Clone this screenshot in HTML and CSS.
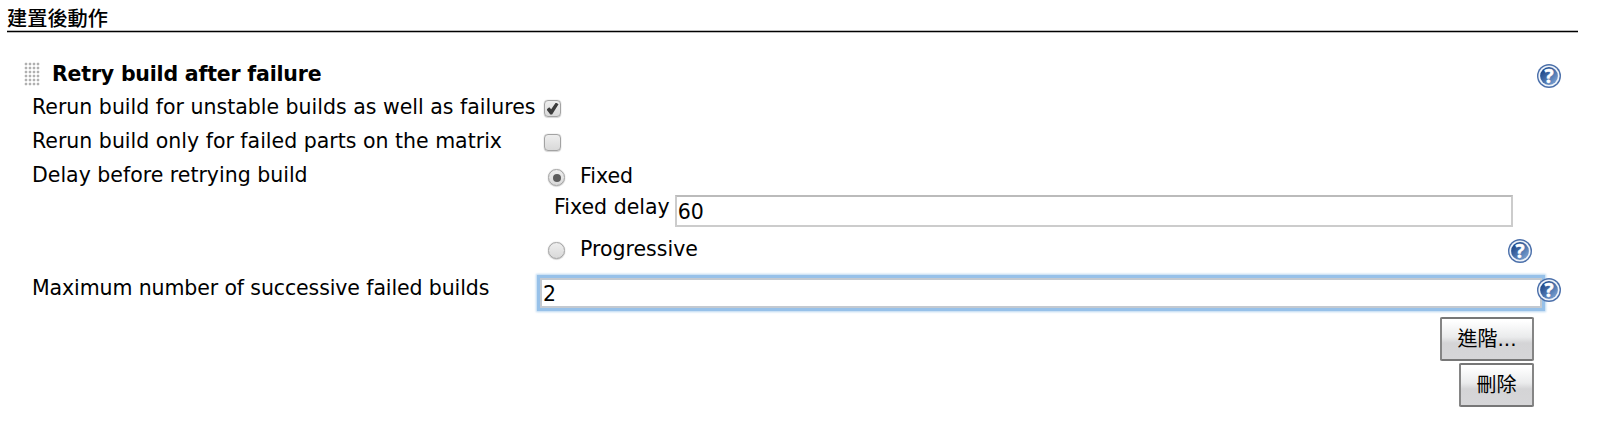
FILE: index.html
```html
<!DOCTYPE html>
<html lang="zh-TW">
<head>
  <meta charset="UTF-8">
  <title>建置後動作</title>
  <link rel="stylesheet" href="styles.css">
</head>
<body>
  <svg class="defs" width="0" height="0">
    <defs>
      <linearGradient id="ball" x1="0" y1="0" x2="1" y2="1">
        <stop offset="0.15" stop-color="#1d4788"/>
        <stop offset="0.9" stop-color="#7ba1d2"/>
      </linearGradient>
      <symbol id="help" viewBox="0 0 24 24">
        <circle cx="12" cy="12" r="12" fill="#4a6faa"/>
        <circle cx="12" cy="12" r="10.6" fill="#eef3f9"/>
        <circle cx="12" cy="12" r="8.9" fill="url(#ball)"/>
        <text x="12" y="18.8" class="mark">?</text>
      </symbol>
    </defs>
  </svg>
  <div class="section-header">建置後動作</div>
  <div class="block">
    <div class="title">
      <span class="dd-handle"></span>
      <b>Retry build after failure</b>
      <a class="help"><svg><use href="#help"/></svg></a>
    </div>
    <div class="row">
      <label class="name" for="unstable">Rerun build for unstable builds as well as failures</label>
      <input type="checkbox" id="unstable" checked>
    </div>
    <div class="row">
      <label class="name" for="matrix">Rerun build only for failed parts on the matrix</label>
      <input type="checkbox" id="matrix">
    </div>
    <div class="row delay">
      <span class="name">Delay before retrying build</span>
      <div class="options">
        <label class="option"><input type="radio" name="delay" checked> Fixed</label>
        <div class="nested">
          <label for="fixed">Fixed delay</label>
          <input type="text" id="fixed" value="60">
        </div>
        <div class="option-row">
          <label class="option"><input type="radio" name="delay"> Progressive</label>
          <a class="help"><svg><use href="#help"/></svg></a>
        </div>
      </div>
    </div>
    <div class="row max">
      <label class="name" for="max">Maximum number of successive failed builds</label>
      <input type="text" id="max" value="2">
      <a class="help"><svg><use href="#help"/></svg></a>
    </div>
    <div class="buttons">
      <button type="button">進階...</button>
      <button type="button">刪除</button>
    </div>
  </div>
</body>
</html>
```

FILE: styles.css
```css
* { box-sizing: border-box; }
body { margin: 0; background: #fff; color: #000; font: 20.5px/34px "DejaVu Sans", "Noto Sans CJK TC", sans-serif; overflow: hidden; }
input, button { font-family: inherit; margin: 0; }
.defs { position: absolute; }

.section-header { margin: 0 22px 0 7px; height: 32px; padding-top: 2px; border-bottom: 1px solid #000; box-shadow: 0 1px 0 #bbb, inset 0 -1px 0 #bbb; font: 500 20.2px/31px "Noto Sans CJK TC", sans-serif; }

.block { padding: 25px 39px 0 24px; }
.title { display: flex; align-items: center; height: 33px; letter-spacing: -0.2px; }
.title .help { margin: 5px 0 0 auto; }
.dd-handle { width: 16px; height: 24px; margin: 0 12px 0 0; background: radial-gradient(circle at 2px 2px, #b0b0b0 0.8px, transparent 1.8px) 0 0 / 4px 4px; }

.row { display: flex; height: 34px; padding-left: 8px; }
.name { width: 512px; flex: none; white-space: nowrap; }

input[type=checkbox], input[type=radio] { appearance: none; width: 17px; height: 17px; border: 1.5px solid #a3a3a3; border-radius: 4px; background: linear-gradient(#eee, #d9d9d9); box-shadow: 0 0 1px #999, 0 1px 1px #ddd; flex: none; display: grid; place-items: center; }
input[type=checkbox] { margin-top: 10px; }
input[type=radio] { border-radius: 50%; }
input[type=checkbox]:checked::after { content: ""; width: 12px; height: 12px; background: #3c3c3c; clip-path: polygon(0 58%, 23% 40%, 39% 57%, 78% 0, 100% 15%, 47% 100%, 32% 100%); }
input[type=radio]:checked::after { content: ""; width: 8px; height: 8px; border-radius: 50%; background: #5c5c5c; }

.delay { height: 113px; }
.options { flex: 1; padding-left: 4px; }
.option { display: flex; align-items: center; gap: 15px; height: 37px; line-height: 37px; }
.option input { position: relative; top: 1px; }
.nested { display: flex; gap: 5px; height: 36px; padding-left: 6px; line-height: 25px; }
.nested input { width: 838px; height: 32px; }
.option-row { display: flex; justify-content: space-between; margin-right: 29px; }
.option-row .help { margin-top: 8px; }

input[type=text] { padding: 1px 1px 0; border: 2px solid #ccc; border-top-color: #bbb; font-size: 20.5px; background: #fff; }
.max { padding-top: 7px; height: 46px; }
.max .name { width: 508px; margin-top: -7px; letter-spacing: -0.11px; }
.max input { width: 1002px; height: 30px; border-color: #c3c9d0; box-shadow: 0 0 0 3px #97c1e9, 0 0 2px 4px #b9d6f0; flex: none; }
.max .help { position: relative; left: -5px; }

.help { width: 24px; height: 24px; flex: none; }
.help svg { display: block; width: 24px; height: 24px; }
.mark { font: bold 19px "Open Sans", sans-serif; fill: #fff; stroke: #fff; stroke-width: 0.5px; text-anchor: middle; }

.buttons { display: flex; flex-direction: column; align-items: flex-end; gap: 2px; margin: 0 27px 0 0; }
button { height: 44px; padding: 0 15.5px; border: 2px solid #777; border-left-color: #858585; border-right-color: #858585; border-radius: 2px; background: linear-gradient(#fff 5%, #eaebec 45%, #d4d4d6 60%, #d6d6d8); color: #000; font: 20px/34px "DejaVu Sans", "Noto Sans CJK TC", sans-serif; }
```
